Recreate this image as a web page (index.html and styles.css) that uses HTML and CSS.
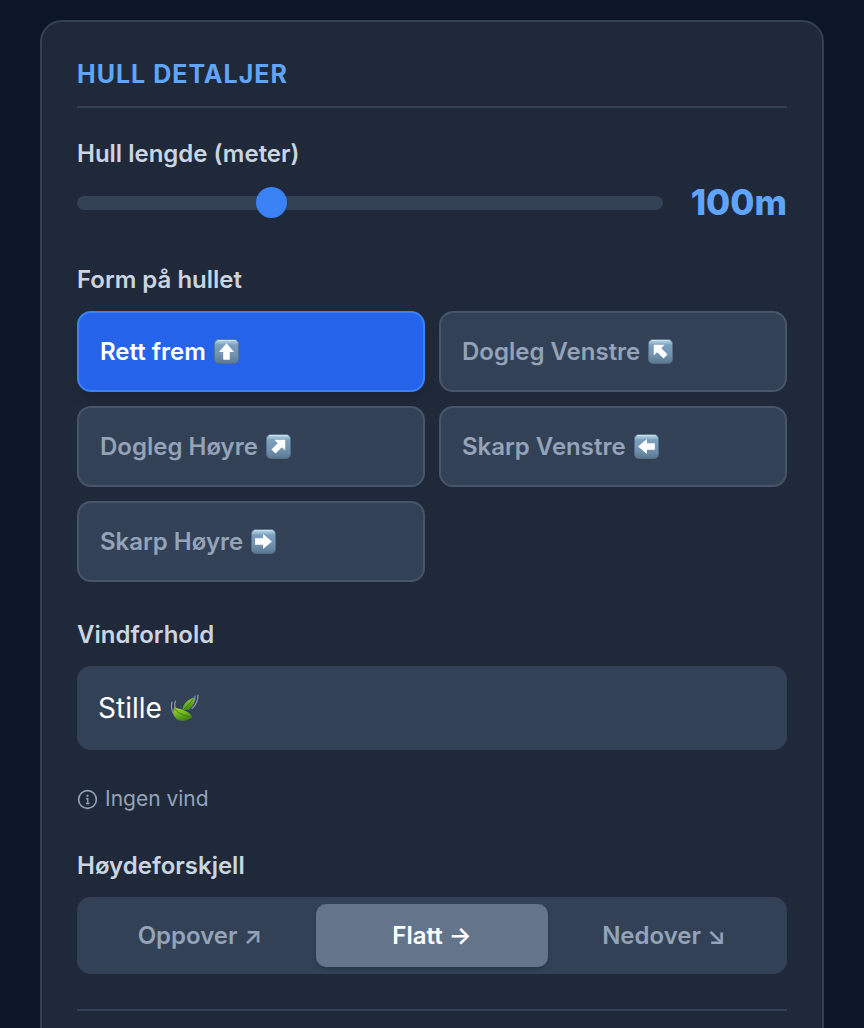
FILE: index.html
```html
<!DOCTYPE html>
<html lang="no">
<head>
<meta charset="utf-8">
<meta name="viewport" content="width=device-width, initial-scale=1">
<title>Hull detaljer</title>
<link rel="stylesheet" href="styles.css">
</head>
<body>
<svg class="defs" aria-hidden="true">
  <defs>
    <linearGradient id="tile" x1="0" y1="0" x2="0" y2="1">
      <stop offset="0" stop-color="#b5d3e4"/>
      <stop offset="0.14" stop-color="#9bbdd4"/>
      <stop offset="0.22" stop-color="#7c9fbe"/>
      <stop offset="0.6" stop-color="#7394b2"/>
      <stop offset="1" stop-color="#5c7890"/>
    </linearGradient>
    <linearGradient id="leaf" x1="0" y1="0" x2="0.4" y2="1">
      <stop offset="0" stop-color="#a2d43c"/>
      <stop offset="0.5" stop-color="#74b821"/>
      <stop offset="1" stop-color="#3f8512"/>
    </linearGradient>
    <symbol id="tile-base" viewBox="0 0 26 26">
      <rect x="0.5" y="0.5" width="25" height="25" rx="4.5" fill="url(#tile)" stroke="#587188" stroke-width="0.8"/>
      <path d="M4 1.6H22" stroke="#c9e2ee" stroke-width="1" stroke-linecap="round"/>
    </symbol>
    <symbol id="arrow-straight" viewBox="0 0 26 26">
      <path d="M13 4.300L20.800 13.400H16.400V21.700H9.600V13.400H5.200Z" fill="#fff"/>
    </symbol>
    <symbol id="arrow-diagonal" viewBox="0 0 26 26">
      <path d="M8.800 6H20V17.200L16.500 13.900L9.900 20.300L5.700 16.200L12.200 9.600Z" fill="#fff"/>
    </symbol>
  </defs>
</svg>
<main class="page">
  <form class="card">
    <h2 class="title">Hull detaljer</h2>

    <div class="field">
      <label class="label label-tight" for="length">Hull lengde (meter)</label>
      <div class="slider-row">
        <input class="slider" id="length" type="range" min="5" max="300" step="5" value="100">
        <output class="value" for="length">100m</output>
      </div>
    </div>

    <div class="field" role="group" aria-labelledby="shape-label">
      <div class="label" id="shape-label">Form på hullet</div>
      <div class="shapes">
        <button class="shape shape-active" type="button" aria-pressed="true">Rett frem
          <svg class="tile" viewBox="0 0 26 26" aria-hidden="true"><use href="#tile-base"/><use href="#arrow-straight"/></svg></button>
        <button class="shape" type="button">Dogleg Venstre
          <svg class="tile" viewBox="0 0 26 26" aria-hidden="true"><use href="#tile-base"/><g transform="rotate(-90 13 13)"><use href="#arrow-diagonal"/></g></svg></button>
        <button class="shape" type="button">Dogleg Høyre
          <svg class="tile" viewBox="0 0 26 26" aria-hidden="true"><use href="#tile-base"/><use href="#arrow-diagonal"/></svg></button>
        <button class="shape" type="button">Skarp Venstre
          <svg class="tile" viewBox="0 0 26 26" aria-hidden="true"><use href="#tile-base"/><g transform="rotate(-90 13 13)"><use href="#arrow-straight"/></g></svg></button>
        <button class="shape" type="button">Skarp Høyre
          <svg class="tile" viewBox="0 0 26 26" aria-hidden="true"><use href="#tile-base"/><g transform="rotate(90 13 13)"><use href="#arrow-straight"/></g></svg></button>
      </div>
    </div>

    <div class="field">
      <label class="label" for="wind">Vindforhold</label>
      <div class="select-wrap">
        <select class="select" id="wind"><option>Stille</option></select>
        <svg class="leaf" viewBox="0 0 30 30" aria-hidden="true">
          <path d="M3 9C1.5 14 3 19 6 23M6.5 8C5 12 6 15 7.5 17M26 3C26 8 23 13 19.5 16M29 2C29 8 26.5 12.500 23 15.500" fill="none" stroke="#8f9aa6" stroke-width="1.200" stroke-linecap="round"/>
          <path d="M5 14.500C10 15.500 19 17 23.500 23.800C19.500 27.500 13 29.500 8.500 26.500C4.500 24 4 19 5 14.500Z" fill="url(#leaf)"/>
          <path d="M13.500 17C14 11 18 7 25 4.500C26 9 23.500 15 19 16.500C17 17.300 15 17.200 13.500 17Z" fill="url(#leaf)"/>
          <path d="M5.500 15C8 20 14 23 22.500 23.800M14.500 16.500C18 14 21.500 10 24.300 5.500" fill="none" stroke="#386f12" stroke-width="0.800"/>
        </svg>
      </div>
      <p class="hint">
        <svg class="info" viewBox="0 0 22 22" aria-hidden="true"><circle cx="11" cy="11" r="9.300" fill="none" stroke="currentColor" stroke-width="1.700"/><circle cx="11" cy="7.200" r="1.200" fill="currentColor"/><path d="M9.500 10.200H11.300V15.200M9.400 15.200H13" fill="none" stroke="currentColor" stroke-width="1.400"/></svg>
        Ingen vind
      </p>
    </div>

    <div class="field" role="group" aria-labelledby="height-label">
      <div class="label" id="height-label">Høydeforskjell</div>
      <div class="segments">
        <button class="segment" type="button">Oppover ↗</button>
        <button class="segment segment-active" type="button" aria-pressed="true">Flatt →</button>
        <button class="segment" type="button">Nedover ↘</button>
      </div>
    </div>

    <hr class="divider">
  </form>
</main>
</body>
</html>
```
FILE: styles.css
```css
* {
  box-sizing: border-box;
}

body {
  margin: 0;
  height: 100vh;
  overflow: hidden;
  background: #0d1628;
  color: #cbd5e1;
  font-family: Inter, "Liberation Sans", sans-serif;
  font-size: 24px;
  line-height: 38px;
}

button,
select {
  font: inherit;
}

.defs {
  position: absolute;
  width: 0;
  height: 0;
}

.page {
  padding: 20px 40px;
}

.card {
  padding: 35px 35px 56px;
  border: 2px solid #334155;
  border-radius: 22px;
  background: #1f293a;
}

.title {
  margin: 0 0 27px;
  padding-bottom: 14px;
  border-bottom: 2px solid #334155;
  color: #60a5fa;
  font-size: 25px;
  font-weight: 700;
  line-height: 35px;
  letter-spacing: 1px;
  text-transform: uppercase;
}

.field {
  margin-bottom: 34px;
}

.label {
  display: block;
  margin-bottom: 12px;
  font-weight: 600;
}

.label-tight {
  margin-bottom: 5px;
}

.slider-row {
  display: flex;
  align-items: center;
  gap: 28px;
}

.slider {
  flex: 1;
  min-width: 0;
  height: 14px;
  margin: 0;
  border-radius: 7px;
  background: #334155;
  appearance: none;
}

.slider::-webkit-slider-thumb {
  width: 31px;
  height: 31px;
  border-radius: 50%;
  background: #3b82f6;
  appearance: none;
}

.value {
  color: #60a5fa;
  font-size: 35px;
  font-weight: 800;
  line-height: 49px;
  text-align: right;
}

.shapes {
  display: grid;
  grid-template-columns: 1fr 1fr;
  gap: 14px;
}

.shape {
  display: flex;
  align-items: center;
  gap: 8px;
  height: 81px;
  padding: 0 21px;
  border: 2px solid #475569;
  border-radius: 14px;
  background: #334157;
  color: #94a3b8;
  font-weight: 600;
}

.shape-active {
  border-color: #3b82f6;
  background: #2563eb;
  box-shadow: 0 8px 14px -3px rgba(0, 0, 0, 0.15);
  color: #fff;
}

.tile {
  width: 25px;
  height: 25px;
}

.select-wrap {
  position: relative;
}

.select {
  display: block;
  width: 100%;
  height: 84px;
  padding: 0 21px;
  border: 0;
  border-radius: 14px;
  background: #334157;
  color: #fff;
  font-size: 28px;
  appearance: none;
}

.leaf {
  position: absolute;
  left: 92px;
  top: 27px;
  width: 30px;
  height: 30px;
  pointer-events: none;
}

.hint {
  display: flex;
  align-items: center;
  gap: 7px;
  margin: 35px 0 0;
  color: #94a3b8;
  font-size: 21px;
  line-height: 28px;
}

.info {
  width: 21px;
  height: 21px;
}

.segments {
  display: grid;
  grid-template-columns: repeat(3, 1fr);
  padding: 7px;
  border-radius: 14px;
  background: #334157;
}

.segment {
  height: 63px;
  padding: 0;
  border: 0;
  border-radius: 10px;
  background: transparent;
  color: #94a3b8;
  font-weight: 600;
}

.segment-active {
  background: #64748b;
  box-shadow: 0 2px 4px rgba(0, 0, 0, 0.2);
  color: #fff;
}

.divider {
  margin: 35px 0 0;
  border: 0;
  border-top: 2px solid #334155;
}
```
